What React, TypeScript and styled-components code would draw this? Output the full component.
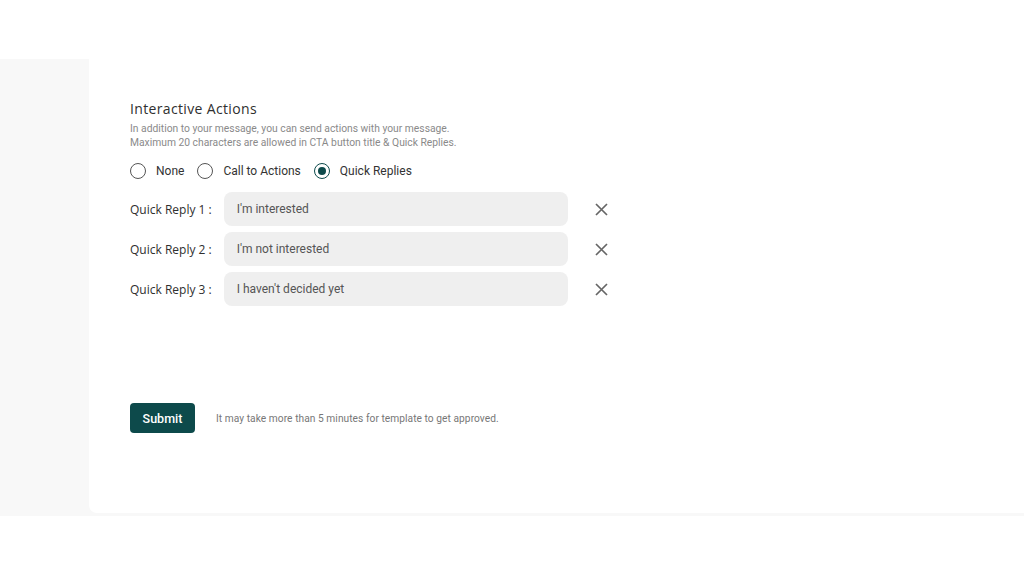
import React from "react";
import styled, { createGlobalStyle } from "styled-components";

const Global = createGlobalStyle`
  html, body { margin: 0; padding: 0; background: #ffffff; }
  body { font-family: Roboto, "Liberation Sans", sans-serif; }
  * { box-sizing: border-box; }
`;

const Page = styled.div`
  width: 1024px;
  height: 576px;
  padding-top: 59px;
  background: #ffffff;
`;

const Shell = styled.div`
  display: flex;
  height: 457px;
  background: #f8f8f8;
  padding-bottom: 3px;
`;

const Side = styled.div`
  width: 89px;
  flex: none;
`;

const Card = styled.main`
  flex: 1;
  background: #ffffff;
  border-bottom-left-radius: 8px;
  padding: 41px 0 0 41px;
  display: flex;
  flex-direction: column;
`;

const Title = styled.h2`
  margin: 0;
  font-family: "Open Sans", sans-serif;
  font-weight: 400;
  font-size: 14px;
  letter-spacing: 0.35px;
  line-height: 18px;
  color: #2f2f2f;
`;

const Desc = styled.p`
  margin: 4px 0 0;
  font-size: 10.3px;
  line-height: 14px;
  color: #8a8a8a;
`;

const RadioGroup = styled.div`
  display: flex;
  align-items: center;
  gap: 13px;
  margin-top: 11px;
  height: 20px;
`;

const RadioLabel = styled.label`
  display: flex;
  align-items: center;
  gap: 10px;
  font-size: 12px;
  color: #333333;
`;

const Circle = styled.span<{ $on?: boolean }>`
  width: 16px;
  height: 16px;
  border-radius: 50%;
  border: 1.6px solid ${(p) => (p.$on ? "#0d4a4b" : "#555555")};
  display: flex;
  align-items: center;
  justify-content: center;
  &::after {
    content: "";
    width: 8px;
    height: 8px;
    border-radius: 50%;
    background: ${(p) => (p.$on ? "#0d4a4b" : "transparent")};
  }
`;

const Rows = styled.div`
  display: flex;
  flex-direction: column;
  gap: 6px;
  margin-top: 11px;
`;

const Row = styled.div`
  display: flex;
  align-items: center;
  height: 34px;
`;

const RowLabel = styled.span`
  font-family: "Open Sans", sans-serif;
  font-size: 12px;
  color: #2f2f2f;
  margin-right: 12px;
  white-space: nowrap;
`;

const Input = styled.div`
  width: 344px;
  height: 34px;
  border-radius: 8px;
  background: #efefef;
  display: flex;
  align-items: center;
  padding-left: 13px;
  font-size: 12px;
  color: #555555;
`;

const Remove = styled.span`
  display: flex;
  margin-left: 27px;
  color: #666666;
`;

const Footer = styled.div`
  display: flex;
  align-items: center;
  gap: 21px;
  margin-top: 97px;
`;

const Submit = styled.button`
  width: 65px;
  height: 30px;
  border: none;
  border-radius: 4px;
  background: #0d4a4b;
  color: #ffffff;
  font-family: Roboto, sans-serif;
  font-weight: 500;
  font-size: 12.5px;
`;

const Note = styled.span`
  font-size: 10.2px;
  letter-spacing: 0.05px;
  color: #777777;
`;

const X = () => (
  <svg width="13" height="13" viewBox="0 0 13 13">
    <path d="M1 1L12 12M12 1L1 12" stroke="currentColor" strokeWidth="1.7" />
  </svg>
);

const replies = ["I'm interested", "I'm not interested", "I haven't decided yet"];

export default function App() {
  return (
    <Page>
      <Global />
      <Shell>
        <Side />
        <Card>
          <Title>Interactive Actions</Title>
          <Desc>
            In addition to your message, you can send actions with your message.
            <br />
            Maximum 20 characters are allowed in CTA button title &amp; Quick Replies.
          </Desc>
          <RadioGroup>
            <RadioLabel><Circle />None</RadioLabel>
            <RadioLabel><Circle />Call to Actions</RadioLabel>
            <RadioLabel><Circle $on />Quick Replies</RadioLabel>
          </RadioGroup>
          <Rows>
            {replies.map((r, i) => (
              <Row key={r}>
                <RowLabel>Quick Reply {i + 1} :</RowLabel>
                <Input>{r}</Input>
                <Remove><X /></Remove>
              </Row>
            ))}
          </Rows>
          <Footer>
            <Submit>Submit</Submit>
            <Note>It may take more than 5 minutes for template to get approved.</Note>
          </Footer>
        </Card>
      </Shell>
    </Page>
  );
}
